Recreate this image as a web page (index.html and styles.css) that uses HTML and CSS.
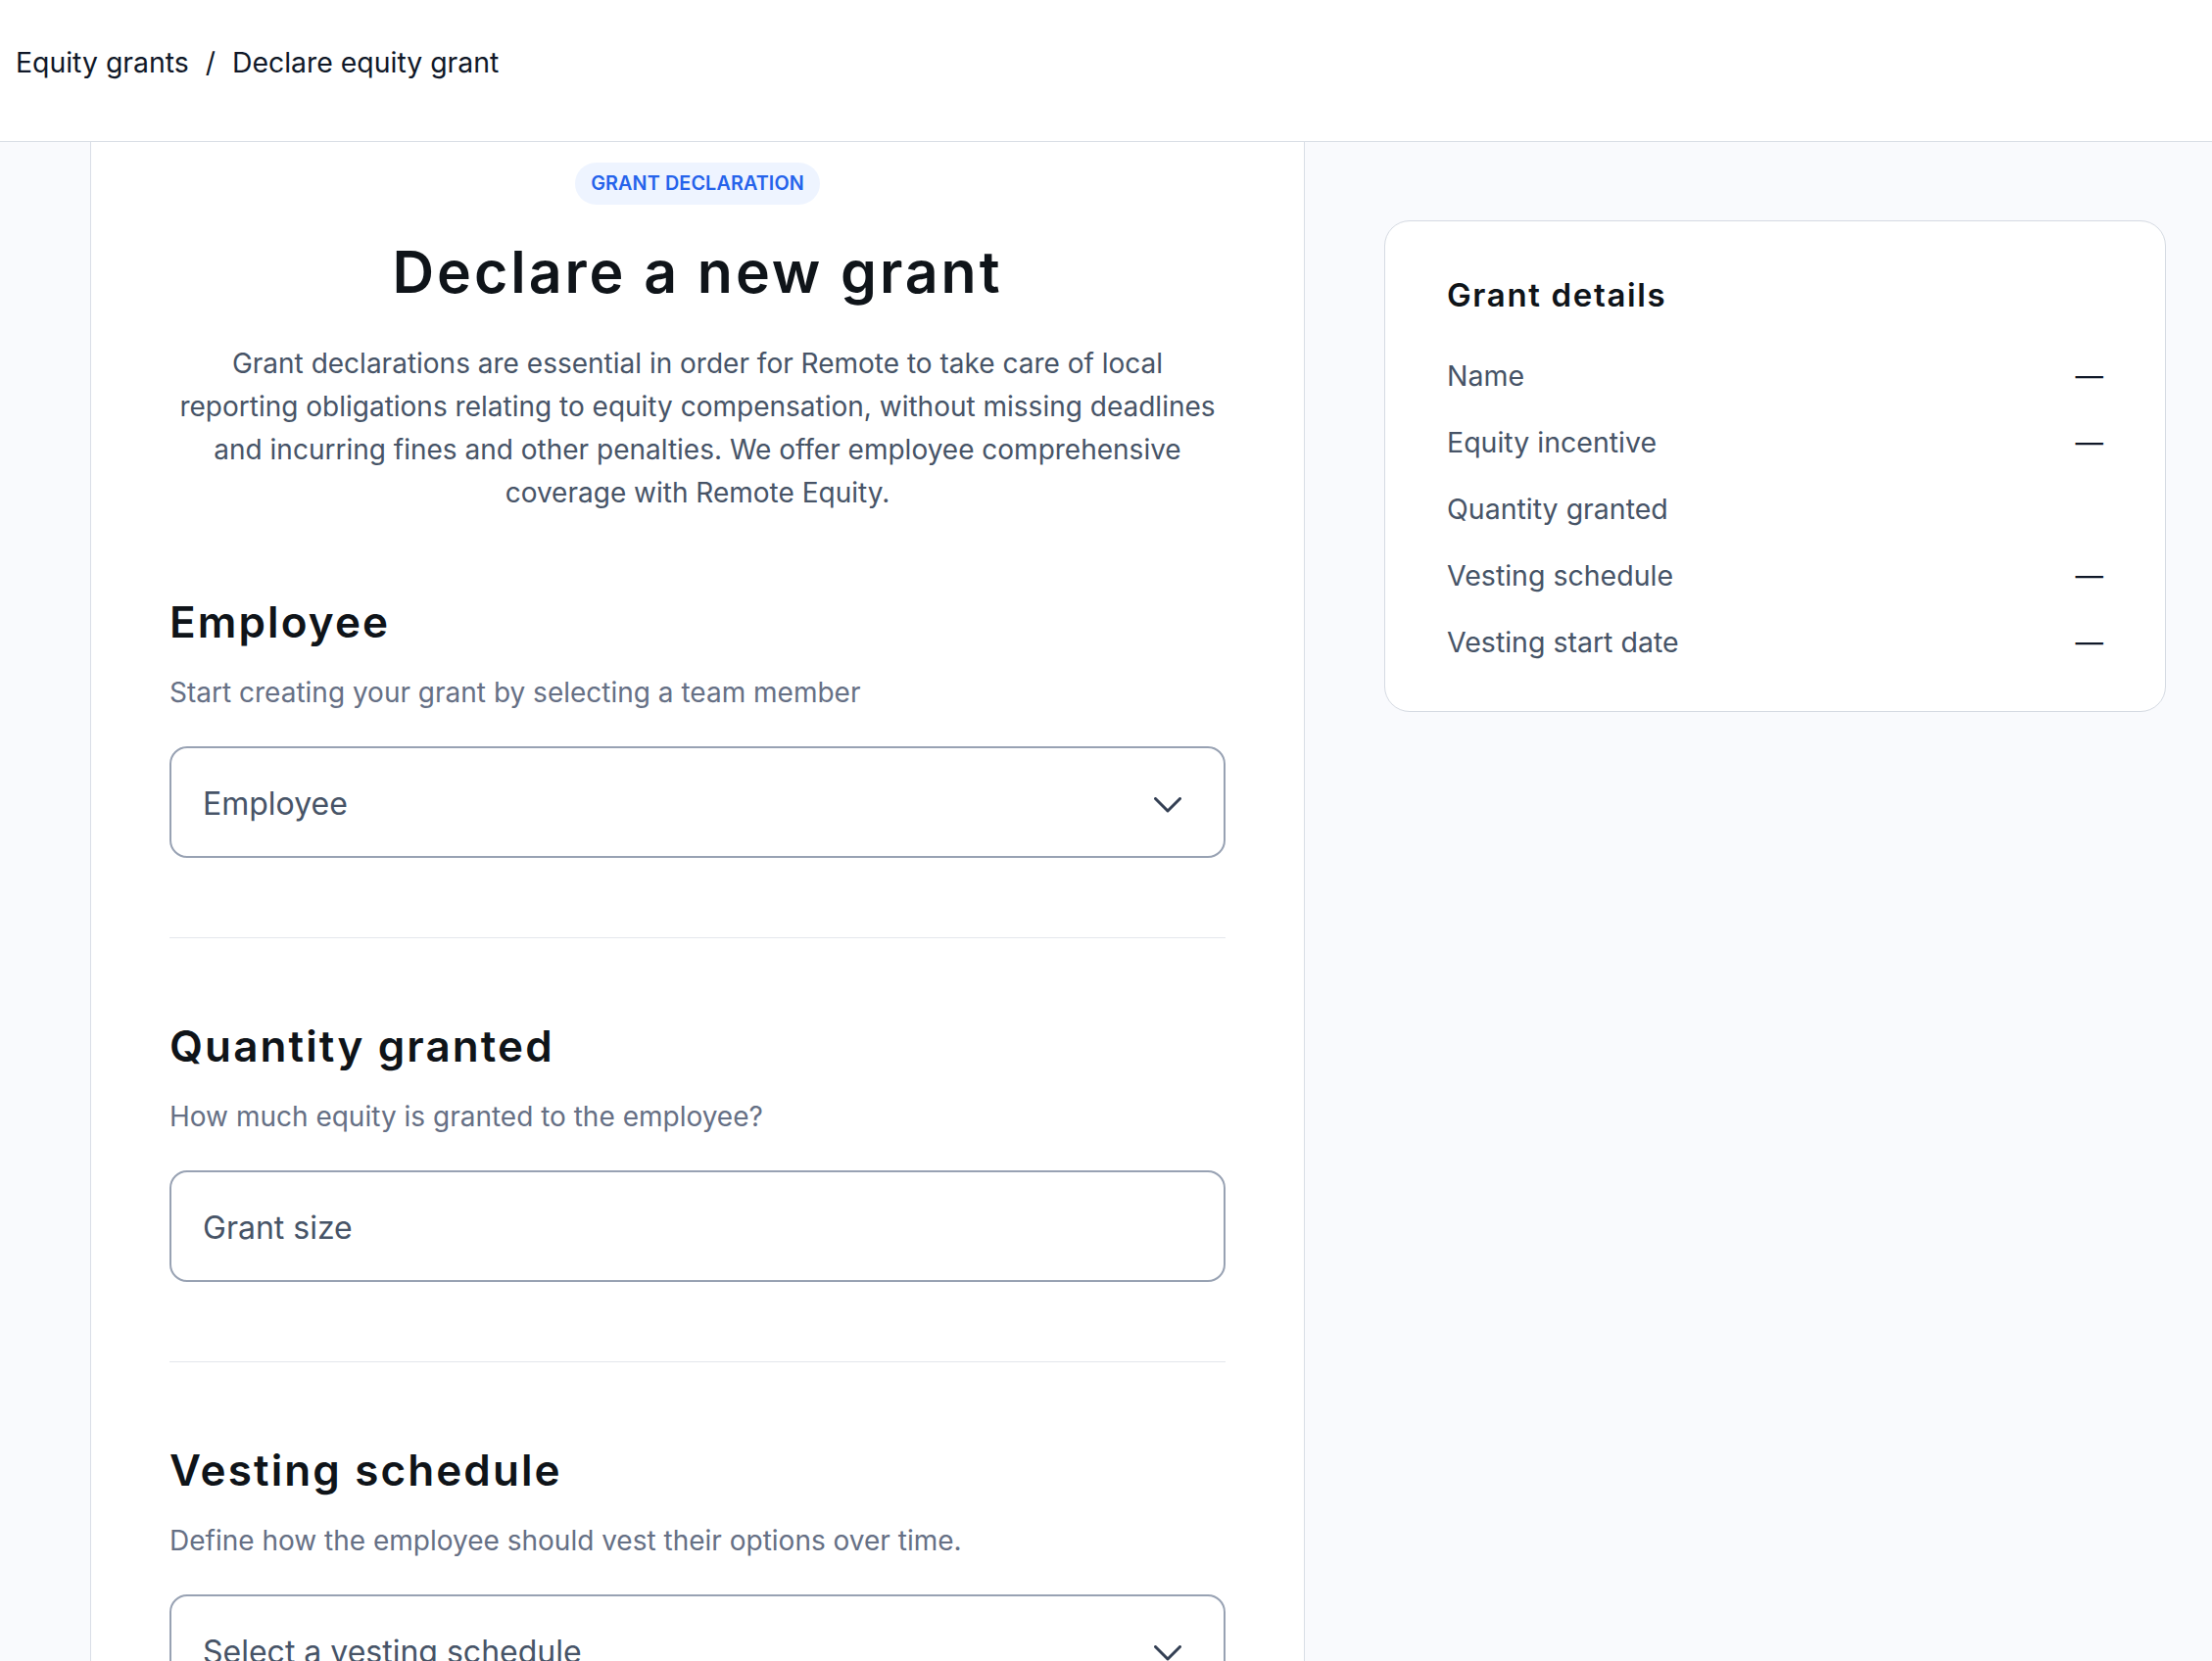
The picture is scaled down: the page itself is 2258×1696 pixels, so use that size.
FILE: index.html
```html
<!DOCTYPE html>
<html lang="en">
<head>
    <meta charset="UTF-8">
    <meta name="viewport" content="width=device-width, initial-scale=1.0">
    <title>Declare equity grant</title>
    <link rel="stylesheet" href="styles.css">
</head>
<body>
    <header class="topbar">
        <nav class="breadcrumbs">
            <a href="#" class="crumb">Equity grants</a>
            <span class="crumb-sep">/</span>
            <span class="crumb current">Declare equity grant</span>
        </nav>
    </header>

    <div class="layout">
        <div class="gutter"></div>

        <main class="form-column">
            <div class="intro">
                <span class="badge">Grant declaration</span>
                <h1 class="page-title">Declare a new grant</h1>
                <p class="lead">Grant declarations are essential in order for Remote to take care of local reporting obligations relating to equity compensation, without missing deadlines and incurring fines and other penalties. We offer employee comprehensive coverage with Remote Equity.</p>
            </div>

            <section class="form-section">
                <h2 class="section-title">Employee</h2>
                <p class="section-hint">Start creating your grant by selecting a team member</p>
                <button type="button" class="field field-select">
                    <span>Employee</span>
                    <svg class="chevron" viewBox="0 0 28 16" width="28" height="16"><path d="M1.5 1.5 L14 14 L26.5 1.5" fill="none" stroke="currentColor" stroke-width="3" stroke-linecap="round" stroke-linejoin="round"/></svg>
                </button>
            </section>

            <section class="form-section">
                <h2 class="section-title">Quantity granted</h2>
                <p class="section-hint">How much equity is granted to the employee?</p>
                <input type="text" class="field" placeholder="Grant size">
            </section>

            <section class="form-section">
                <h2 class="section-title">Vesting schedule</h2>
                <p class="section-hint">Define how the employee should vest their options over time.</p>
                <button type="button" class="field field-select">
                    <span>Select a vesting schedule</span>
                    <svg class="chevron" viewBox="0 0 28 16" width="28" height="16"><path d="M1.5 1.5 L14 14 L26.5 1.5" fill="none" stroke="currentColor" stroke-width="3" stroke-linecap="round" stroke-linejoin="round"/></svg>
                </button>
            </section>

            <section class="form-section">
                <h2 class="section-title">Vesting start date</h2>
                <p class="section-hint">When does the vesting period begin?</p>
                <input type="text" class="field" placeholder="Select a date">
            </section>
        </main>

        <aside class="summary">
            <div class="summary-card">
                <h3 class="summary-title">Grant details</h3>
                <dl class="summary-list">
                    <div class="summary-row"><dt>Name</dt><dd>—</dd></div>
                    <div class="summary-row"><dt>Equity incentive</dt><dd>—</dd></div>
                    <div class="summary-row"><dt>Quantity granted</dt><dd></dd></div>
                    <div class="summary-row"><dt>Vesting schedule</dt><dd>—</dd></div>
                    <div class="summary-row"><dt>Vesting start date</dt><dd>—</dd></div>
                </dl>
            </div>
        </aside>
    </div>
</body>
</html>
```

FILE: styles.css
```css
* {
    box-sizing: border-box;
}
body {
    margin: 0;
    font-family: Inter, "Noto Sans", Arial, sans-serif;
    color: #101828;
    background: #f9fafd;
    overflow: hidden;
}
.topbar {
    height: 145px;
    padding: 42px 16px 0;
    background: white;
    border-bottom: 1px solid #d9dee6;
}
.breadcrumbs {
    display: flex;
    gap: 17px;
    font-size: 28.4px;
    line-height: 44px;
}
.crumb {
    color: #101828;
    text-decoration: none;
}
.crumb-sep {
    color: #101828;
}
.layout {
    display: flex;
    min-height: calc(100vh - 145px);
}
.gutter {
    width: 92px;
    flex: none;
}
.form-column {
    width: 1240px;
    flex: none;
    background: white;
    border-left: 1px solid #d9dee6;
    border-right: 1px solid #d9dee6;
    padding: 21px 80px 120px;
}
.intro {
    text-align: center;
}
.badge {
    display: inline-block;
    height: 43px;
    padding: 0 16px;
    border-radius: 22px;
    background: #eef4ff;
    color: #2563eb;
    font-size: 19.8px;
    line-height: 43px;
    font-weight: 600;
    text-transform: uppercase;
    letter-spacing: 0.1px;
}
.page-title {
    margin: 34px 0 0;
    font-size: 59px;
    line-height: 70px;
    font-weight: 600;
    letter-spacing: 0.05em;
    color: #0f1419;
}
.lead {
    max-width: 1070px;
    margin: 36px auto 0;
    font-size: 28px;
    line-height: 44px;
    color: #475467;
}
.form-section {
    padding: 84px 0 81px;
    border-bottom: 1px solid #e4e7ec;
}
.form-section:last-child {
    border-bottom: none;
}
.section-title {
    margin: 0;
    font-size: 44px;
    line-height: 52px;
    font-weight: 600;
    letter-spacing: 0.048em;
    color: #0f1419;
}
.section-hint {
    margin: 24px 0 0;
    font-size: 28px;
    line-height: 44px;
    color: #667085;
}
.field {
    display: flex;
    align-items: center;
    justify-content: space-between;
    width: 100%;
    height: 114px;
    margin-top: 33px;
    padding: 2px 43px 0 32px;
    border: 2px solid #98a2b3;
    border-radius: 18px;
    background: white;
    font-family: inherit;
    font-size: 32px;
    color: #475467;
    text-align: left;
}
.field::placeholder {
    color: #475467;
}
.chevron {
    margin-top: 4px;
    color: #344054;
}
.summary {
    flex: 1;
    padding: 80px 47px 0 81px;
}
.summary-card {
    background: white;
    border: 1.5px solid #d5dae2;
    border-radius: 26px;
    padding: 55px 63px 48px;
}
.summary-title {
    margin: 0;
    font-size: 33px;
    line-height: 40px;
    font-weight: 600;
    letter-spacing: 0.05em;
    color: #0f1419;
}
.summary-list {
    margin: 41px 0 0;
    display: flex;
    flex-direction: column;
    gap: 24px;
}
.summary-row {
    display: flex;
    justify-content: space-between;
    font-size: 28.5px;
    line-height: 44px;
}
.summary-row dt {
    color: #475467;
}
.summary-row dd {
    margin: 0;
    color: #101828;
}
```
